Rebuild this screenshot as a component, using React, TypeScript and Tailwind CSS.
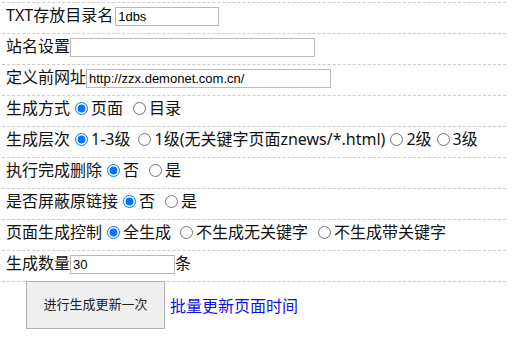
import React from 'react';

const Radio: React.FC<{ name: string; checked?: boolean }> = ({ name, checked }) => (
  <input
    type="radio"
    name={name}
    defaultChecked={checked}
    className="ml-[5px] mr-[3px] h-[13px] w-[13px] align-[-1px]"
  />
);

const Gap: React.FC<{ w?: string }> = ({ w = 'w-[5px]' }) => <span className={`inline-block ${w}`} />;

const Row: React.FC<{ children: React.ReactNode }> = ({ children }) => (
  <div className="h-[31px] border-t border-dashed border-[#cccccc] pl-[4px] pt-[2px]">
    <div className="whitespace-nowrap leading-[20px]">{children}</div>
  </div>
);

const inputCls =
  "h-[19px] border border-[#bdb9b3] bg-white px-[2px] text-[13px] font-['Liberation_Sans',Arial,sans-serif] text-black align-middle outline-none";

export default function App() {
  return (
    <div className="w-[529px] h-[341px] bg-white pt-[2px] pl-[2px] text-[16px] text-[#111] font-['Noto_Sans','Noto_Sans_CJK_SC',sans-serif]">
      <div className="w-[504px]">
        <Row>
          TXT存放目录名<input className={`${inputCls} w-[104px] ml-[2px]`} defaultValue="1dbs" />
        </Row>
        <Row>
          站名设置<input className={`${inputCls} w-[245px]`} defaultValue="" />
        </Row>
        <Row>
          定义前网址<input className={`${inputCls} w-[245px]`} defaultValue="http://zzx.demonet.com.cn/" />
        </Row>
        <Row>
          生成方式<Radio name="fs" checked />页面<Gap /><Radio name="fs" />目录
        </Row>
        <Row>
          生成层次<Radio name="cc" checked />1-3级<Gap w="w-[3px]" /><Radio name="cc" />1级(无关键字页面znews/*.html)<Radio name="cc" />2级<Radio name="cc" />3级
        </Row>
        <Row>
          执行完成删除<Radio name="sc" checked />否<Gap /><Radio name="sc" />是
        </Row>
        <Row>
          是否屏蔽原链接<Radio name="pb" checked />否<Gap /><Radio name="pb" />是
        </Row>
        <Row>
          页面生成控制<Radio name="kz" checked />全生成<Gap w="w-[4px]" /><Radio name="kz" />不生成无关键字<Gap /><Radio name="kz" />不生成带关键字
        </Row>
        <Row>
          生成数量<input className={`${inputCls} w-[105px]`} defaultValue="30" />条
        </Row>
        <div className="border-t border-dashed border-[#cccccc] pl-[24px] flex items-center">
          <button className="w-[139px] h-[48px] -mt-px bg-[#efefef] border border-[#b5b1ab] text-[13px] text-[#222]">
            进行生成更新一次
          </button>
          <a href="#" className="ml-[5px] text-[#1010ee]">批量更新页面时间</a>
        </div>
      </div>
    </div>
  );
}
